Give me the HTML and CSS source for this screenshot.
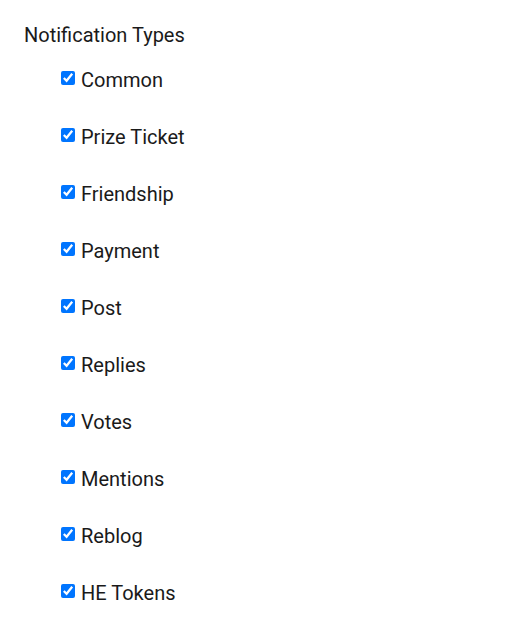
FILE: index.html
```html
<!DOCTYPE html>
<html lang="en">

<head>
    <meta charset="UTF-8">
    <meta name="viewport" content="width=device-width, initial-scale=1.0">
    <title>Notification Types</title>
    <link rel="stylesheet" href="styles.css">
</head>

<body>
    <section class="settings">
        <h3 class="settings_title">Notification Types</h3>
        <ul class="typeList">
            <li><label class="type"><input type="checkbox" checked><span>Common</span></label></li>
            <li><label class="type"><input type="checkbox" checked><span>Prize Ticket</span></label></li>
            <li><label class="type"><input type="checkbox" checked><span>Friendship</span></label></li>
            <li><label class="type"><input type="checkbox" checked><span>Payment</span></label></li>
            <li><label class="type"><input type="checkbox" checked><span>Post</span></label></li>
            <li><label class="type"><input type="checkbox" checked><span>Replies</span></label></li>
            <li><label class="type"><input type="checkbox" checked><span>Votes</span></label></li>
            <li><label class="type"><input type="checkbox" checked><span>Mentions</span></label></li>
            <li><label class="type"><input type="checkbox" checked><span>Reblog</span></label></li>
            <li><label class="type"><input type="checkbox" checked><span>HE Tokens</span></label></li>
        </ul>
    </section>
</body>

</html>
```

FILE: styles.css
```css
body {
    margin: 0;
    background: #fff;
    font-family: Roboto, "Noto Sans", sans-serif;
    color: #1a1a1a;
}

.settings {
    padding: 22px 24px;
}

.settings_title {
    margin: 0;
    font-size: 20px;
    font-weight: 400;
    line-height: 26px;
}

.typeList {
    list-style: none;
    margin: 0;
    padding: 19px 0 0 36px;
    display: flex;
    flex-direction: column;
    gap: 31px;
}

.type {
    display: flex;
    align-items: flex-start;
    font-size: 20px;
    line-height: 26px;
}

.type input {
    width: 14px;
    height: 14px;
    margin: 4px 6px 0 1px;
    accent-color: #0075ff;
}
```
